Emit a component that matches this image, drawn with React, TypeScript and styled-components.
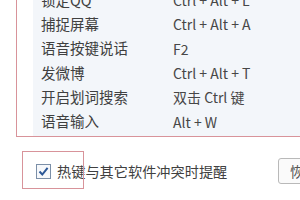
import React from "react";
import styled, { createGlobalStyle } from "styled-components";

const GlobalStyle = createGlobalStyle`
  html, body {
    margin: 0;
    padding: 0;
    background: #ffffff;
    width: 300px;
    height: 200px;
    overflow: hidden;
  }
  body {
    font-family: "Noto Sans CJK SC", "Noto Sans", sans-serif;
    color: #3a3a3a;
  }
`;

const Page = styled.div`
  width: 300px;
  height: 200px;
  display: flex;
  flex-direction: column;
  overflow: hidden;
`;

// the list panel, scrolled a little so its first row is cut at the top
const Marked = styled.div`
  margin-left: 16px;
  width: 320px;
  height: 137px;
  border-left: 1.5px solid #d8939a;
  border-bottom: 1.5px solid #d8939a;
  padding-left: 16px;
  box-sizing: border-box;
  overflow: hidden;
  flex-shrink: 0;
`;

const List = styled.div`
  background: #f3f6fa;
  min-height: calc(100% + 12px);
  margin-top: -12px;
  display: flex;
  flex-direction: column;
`;

const Row = styled.div`
  display: grid;
  grid-template-columns: 132px 1fr;
  height: 24.3px;
  flex-shrink: 0;
  align-items: center;
  padding-left: 8px;
  font-size: 14.5px;
  line-height: 1;
  white-space: nowrap;
`;

const Name = styled.span`
  color: #404040;
`;

const Keys = styled.span`
  color: #474747;
  font-size: 14px;
`;

const Footer = styled.div`
  display: flex;
  align-items: center;
  height: 44px;
  margin-top: 12px;
  padding-left: 36px;
  flex-shrink: 0;
`;

const CheckWrap = styled.label`
  position: relative;
  display: flex;
  align-items: center;
  gap: 6px;
  flex: 0 0 auto;
`;

const LabelText = styled.span`
  font-size: 14.2px;
  line-height: 1;
  color: #404040;
  white-space: nowrap;
`;

const Box = styled.span`
  width: 13px;
  height: 13px;
  border: 1px solid #7b8fa8;
  background: #f6f8fb;
  display: flex;
  align-items: center;
  justify-content: center;
  flex-shrink: 0;
`;

const Highlight = styled.span`
  position: absolute;
  left: -14px;
  top: -13px;
  width: 60px;
  height: 36px;
  border: 1.5px solid #d8939a;
  pointer-events: none;
`;

const Button = styled.button`
  flex-shrink: 0;
  margin-left: auto;
  margin-right: -42px;
  height: 26px;
  width: 64px;
  border: 1px solid #b9b9b9;
  border-radius: 3px;
  background: #fafafa;
  font-family: inherit;
  font-size: 14px;
  color: #555;
  text-align: left;
  padding: 0 0 0 11px;
  white-space: nowrap;
  overflow: hidden;
`;

const rows: [string, string][] = [
  ["锁定QQ", "Ctrl + Alt + L"],
  ["捕捉屏幕", "Ctrl + Alt + A"],
  ["语音按键说话", "F2"],
  ["发微博", "Ctrl + Alt + T"],
  ["开启划词搜索", "双击 Ctrl 键"],
  ["语音输入", "Alt + W"],
];

export default function App() {
  return (
    <>
      <GlobalStyle />
      <Page>
        <Marked>
          <List>
            {rows.map(([name, keys]) => (
              <Row key={name}>
                <Name>{name}</Name>
                <Keys>{keys}</Keys>
              </Row>
            ))}
          </List>
        </Marked>
        <Footer>
          <CheckWrap>
            <Box>
              <svg width="11" height="11" viewBox="0 0 11 11">
                <path d="M1.5 5.5 L4.3 8.5 L9.6 1.8" fill="none" stroke="#2b5797" strokeWidth="2" />
              </svg>
            </Box>
            <LabelText>热键与其它软件冲突时提醒</LabelText>
            <Highlight />
          </CheckWrap>
          <Button>恢复默认</Button>
        </Footer>
      </Page>
    </>
  );
}
